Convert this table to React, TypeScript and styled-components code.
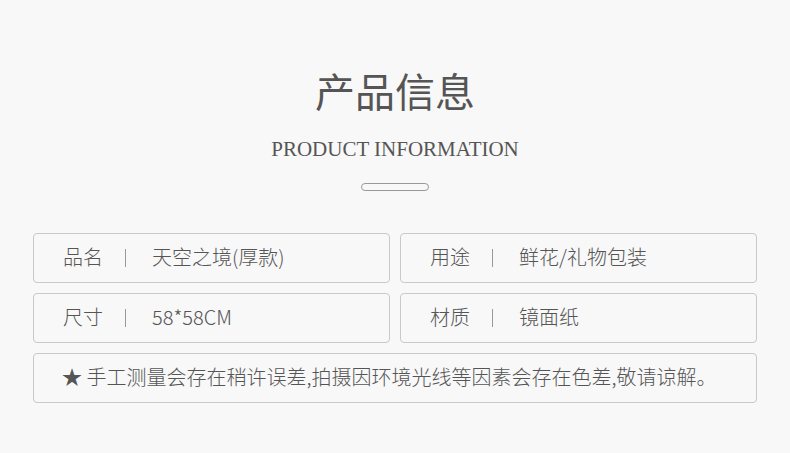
import React from 'react';
import styled, {createGlobalStyle} from 'styled-components';

const GlobalStyle = createGlobalStyle`
  html, body {
    margin: 0;
    padding: 0;
    background: #f8f8f8;
  }
  body {
    font-family: "Noto Sans CJK SC", "Noto Sans", sans-serif;
    color: #555;
  }
`;

interface InfoItem {
    label: string;
    value: string;
}

const items: InfoItem[] = [
    {label: '品名', value: '天空之境(厚款)'},
    {label: '用途', value: '鲜花/礼物包装'},
    {label: '尺寸', value: '58*58CM'},
    {label: '材质', value: '镜面纸'},
];

const App: React.FC = () => {
    return (
        <Page>
            <GlobalStyle/>
            <Title>产品信息</Title>
            <SubTitle>PRODUCT INFORMATION</SubTitle>
            <Pill/>
            <Grid>
                {items.map(item => (
                    <Cell key={item.label}>
                        <Label>{item.label}</Label>
                        <Divider/>
                        <Value>{item.value}</Value>
                    </Cell>
                ))}
                <Note>★ 手工测量会存在稍许误差,拍摄因环境光线等因素会存在色差,敬请谅解。</Note>
            </Grid>
        </Page>
    )
}
export default App;

const Page = styled.div`
  width: 790px;
  height: 453px;
  box-sizing: border-box;
  padding: 64px 33px 0;
  display: flex;
  flex-direction: column;
  align-items: center;
`;

const Title = styled.h1`
  margin: 0;
  font-size: 40px;
  line-height: 52px;
  font-weight: 400;
  color: #555;
`;

const SubTitle = styled.div`
  margin-top: 21px;
  font-family: "Liberation Serif", "DejaVu Serif", serif;
  font-size: 21px;
  line-height: 24px;
  color: #555;
`;

const Pill = styled.div`
  margin-top: 22px;
  width: 66px;
  height: 6px;
  border: 1px solid #9a9a9a;
  border-radius: 5px;
`;

const Grid = styled.div`
  margin-top: 42px;
  width: 100%;
  display: grid;
  grid-template-columns: 1fr 1fr;
  gap: 10px;
`;

const Cell = styled.div`
  height: 50px;
  box-sizing: border-box;
  border: 1px solid #c9c9c9;
  border-radius: 4px;
  display: flex;
  align-items: center;
  padding: 0 0 3px 29px;
  font-size: 20px;
  font-weight: 300;
  color: #555;
`;

const Label = styled.span`
  width: 48px;
`;

const Divider = styled.span`
  width: 1px;
  height: 18px;
  margin: 3px 26px 0 14px;
  background: #999;
`;

const Value = styled.span`
  color: #555;
`;

const Note = styled.div`
  grid-column: 1 / -1;
  height: 50px;
  box-sizing: border-box;
  border: 1px solid #c9c9c9;
  border-radius: 4px;
  display: flex;
  align-items: center;
  padding: 0 0 3px 28px;
  font-size: 20px;
  font-weight: 300;
  color: #555;
`;
